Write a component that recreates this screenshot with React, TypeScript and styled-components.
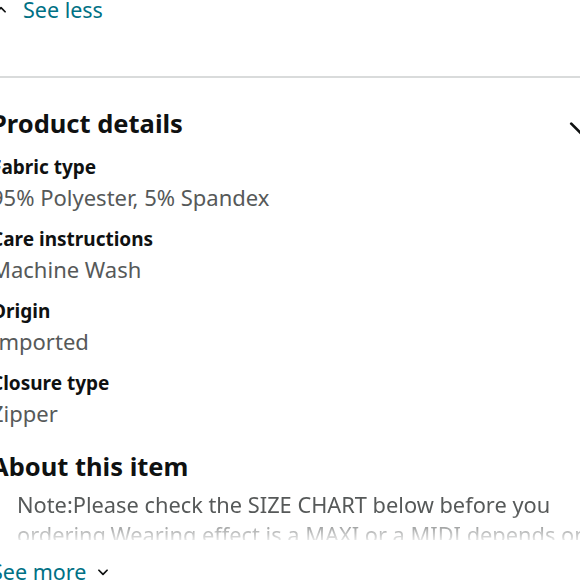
import styled, { createGlobalStyle } from "styled-components";

const GlobalStyle = createGlobalStyle`
  html, body {
    margin: 0;
    padding: 0;
    background: #ffffff;
    overflow: hidden;
  }
  body {
    font-family: "Noto Sans", "Liberation Sans", sans-serif;
    color: #0f1111;
  }
`;

const Page = styled.div`
  width: 600px;
  margin-left: -9px;
  margin-top: -6px;
`;

const ToggleLink = styled.a<{ $gap?: number; $indent?: number }>`
  display: flex;
  align-items: center;
  gap: ${(p) => p.$gap ?? 10}px;
  padding-left: ${(p) => p.$indent ?? 0}px;
  color: #007185;
  font-size: 21.5px;
  line-height: 32px;
  text-decoration: none;
`;

const Caret = styled.svg`
  width: 14px;
  height: 14px;
  flex-shrink: 0;
  color: #0f1111;
`;

const Divider = styled.hr`
  border: none;
  border-top: 2px solid #d9dbdb;
  margin: 50px 0 0;
`;

const SectionHeader = styled.div`
  display: flex;
  justify-content: space-between;
  align-items: center;
  margin-top: 27px;
`;

const SectionTitle = styled.h2<{ $top?: number }>`
  margin: ${(p) => p.$top ?? 0}px 0 0;
  font-size: 25.5px;
  font-weight: 700;
  line-height: 36px;
`;

const Chevron = styled.svg`
  width: 26px;
  height: 26px;
  margin: 10px -3px 0 0;
  color: #0f1111;
`;

const DetailList = styled.dl`
  margin: 11px 0 0;
`;

const DetailTerm = styled.dt`
  font-size: 19px;
  font-weight: 700;
  line-height: 30px;
`;

const DetailValue = styled.dd`
  margin: 0 0 12px;
  font-size: 22px;
  line-height: 30px;
  color: #565959;
`;

const AboutBody = styled.div`
  margin-top: 6px;
  padding-left: 26px;
  max-height: 50px;
  overflow: hidden;
  -webkit-mask-image: linear-gradient(to bottom, #000 45%, rgba(0, 0, 0, 0.15) 100%);
  mask-image: linear-gradient(to bottom, #000 45%, rgba(0, 0, 0, 0.15) 100%);
`;

const AboutText = styled.p`
  margin: 0;
  font-size: 21.8px;
  line-height: 30px;
  color: #565959;
`;

const MoreRow = styled.div`
  margin-top: 16px;
`;

const details = [
  { label: "Fabric type", value: "95% Polyester, 5% Spandex" },
  { label: "Care instructions", value: "Machine Wash" },
  { label: "Origin", value: "Imported" },
  { label: "Closure type", value: "Zipper" },
];

const App = () => {
  return (
    <Page>
      <GlobalStyle />
      <ToggleLink href="#" $gap={15} $indent={3}>
        <Caret viewBox="0 0 24 24" fill="none" stroke="currentColor" strokeWidth="3" strokeLinecap="round" strokeLinejoin="round">
          <polyline points="5 15 12 8 19 15" />
        </Caret>
        See less
      </ToggleLink>
      <Divider />
      <SectionHeader>
        <SectionTitle>Product details</SectionTitle>
        <Chevron viewBox="0 0 24 24" fill="none" stroke="currentColor" strokeWidth="2.5" strokeLinecap="round" strokeLinejoin="round">
          <polyline points="3 8 12 17 21 8" />
        </Chevron>
      </SectionHeader>
      <DetailList>
        {details.map((d) => (
          <div key={d.label}>
            <DetailTerm>{d.label}</DetailTerm>
            <DetailValue>{d.value}</DetailValue>
          </div>
        ))}
      </DetailList>
      <SectionTitle $top={20}>About this item</SectionTitle>
      <AboutBody>
        <AboutText>
          Note:Please check the SIZE CHART below before you ordering.Wearing effect is a MAXI or a MIDI depends on your height.
        </AboutText>
      </AboutBody>
      <MoreRow>
        <ToggleLink href="#">
          See more
          <Caret viewBox="0 0 24 24" fill="none" stroke="currentColor" strokeWidth="3" strokeLinecap="round" strokeLinejoin="round">
            <polyline points="5 9 12 16 19 9" />
          </Caret>
        </ToggleLink>
      </MoreRow>
    </Page>
  );
};

export default App;
